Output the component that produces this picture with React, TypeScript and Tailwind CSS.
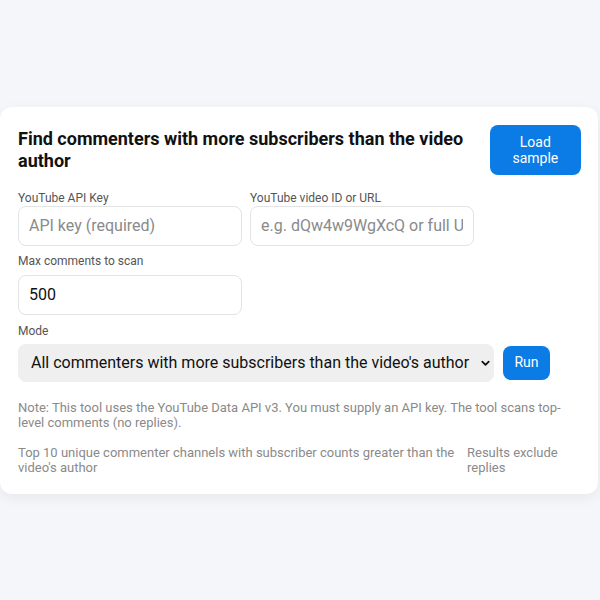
import * as React from "react";

export default function App() {
  const [apiKey, setApiKey] = React.useState("");
  const [video, setVideo] = React.useState("");
  const [max, setMax] = React.useState("500");
  const [mode, setMode] = React.useState("all");

  return (
    <div
      className="flex min-h-screen items-center bg-[#f5f6fa]"
      style={{ fontFamily: "Roboto, 'Noto Sans', sans-serif" }}
    >
      <div className="w-[598px] rounded-xl bg-white p-[18px] pb-[19px] shadow-[0_4px_14px_rgba(0,0,0,0.06)]">
        {/* Header */}
        <div className="flex items-center gap-4">
          <h1 className="w-[460px] text-[18px] font-bold leading-[22px] text-[#111]">
            Find commenters with more subscribers than the video author
          </h1>
          <button
            type="button"
            className="ml-auto mr-[-1px] h-[50px] w-[92px] rounded-lg bg-[#0b7be6] px-3 text-[14px] leading-[16px] text-white"
          >
            Load sample
          </button>
        </div>

        {/* Key + video */}
        <div className="mt-[16px] flex gap-2">
          <label className="flex w-[224px] flex-col">
            <span className="text-[12px] leading-[14px] text-[#555]">YouTube API Key</span>
            <input
              value={apiKey}
              onChange={(e) => setApiKey(e.target.value)}
              placeholder="API key (required)"
              className="mt-[1px] h-[40px] rounded-lg border border-[#e3e3e3] px-[10px] text-[16px] text-[#111] placeholder:text-[#8a8a8a] outline-none"
            />
          </label>
          <label className="flex w-[224px] flex-col">
            <span className="text-[12px] leading-[14px] text-[#555]">YouTube video ID or URL</span>
            <input
              value={video}
              onChange={(e) => setVideo(e.target.value)}
              placeholder="e.g. dQw4w9WgXcQ or full URL"
              className="mt-[1px] h-[40px] rounded-lg border border-[#e3e3e3] px-[10px] text-[16px] text-[#111] placeholder:text-[#8a8a8a] outline-none"
            />
          </label>
        </div>

        {/* Max comments */}
        <label className="mt-[8px] flex w-[224px] flex-col">
          <span className="text-[12px] leading-[14px] text-[#555]">Max comments to scan</span>
          <input
            value={max}
            onChange={(e) => setMax(e.target.value)}
            className="mt-[7px] h-[40px] rounded-lg border border-[#e3e3e3] px-[10px] text-[16px] text-[#111] outline-none"
          />
        </label>

        {/* Mode */}
        <div className="mt-[9px] text-[12px] leading-[14px] text-[#555]">Mode</div>
        <div className="mt-[6px] flex items-center gap-[9px]">
          <div className="relative w-[476px]">
            <select
              value={mode}
              onChange={(e) => setMode(e.target.value)}
              className="h-[38px] w-full appearance-none rounded-lg bg-[#efefef] pl-[13px] pr-[20px] text-[16px] text-[#111] outline-none"
            >
              <option value="all">All commenters with more subscribers than the video's author</option>
              <option value="top">Top 10 commenters</option>
            </select>
            <svg
              viewBox="0 0 24 24"
              className="pointer-events-none absolute right-[3px] top-1/2 h-[11px] w-[11px] -translate-y-1/2"
              fill="none"
              stroke="#111"
              strokeWidth="4"
              strokeLinecap="round"
              strokeLinejoin="round"
            >
              <path d="M5 9l7 7 7-7" />
            </svg>
          </div>
          <button
            type="button"
            className="h-[34px] w-[47px] rounded-lg bg-[#0b7be6] text-[14px] text-white"
          >
            Run
          </button>
        </div>

        {/* Notes */}
        <p className="mt-[18px] text-[13px] leading-[15px] text-[#8a8a8a]">
          Note: This tool uses the YouTube Data API v3. You must supply an API key. The tool scans top-level comments (no replies).
        </p>
        <div className="mt-[15px] flex gap-3 text-[13px] leading-[15px] text-[#8a8a8a]">
          <p className="w-[437px]">
            Top 10 unique commenter channels with subscriber counts greater than the video's author
          </p>
          <p className="w-[100px]">Results exclude replies</p>
        </div>
      </div>
    </div>
  );
}
